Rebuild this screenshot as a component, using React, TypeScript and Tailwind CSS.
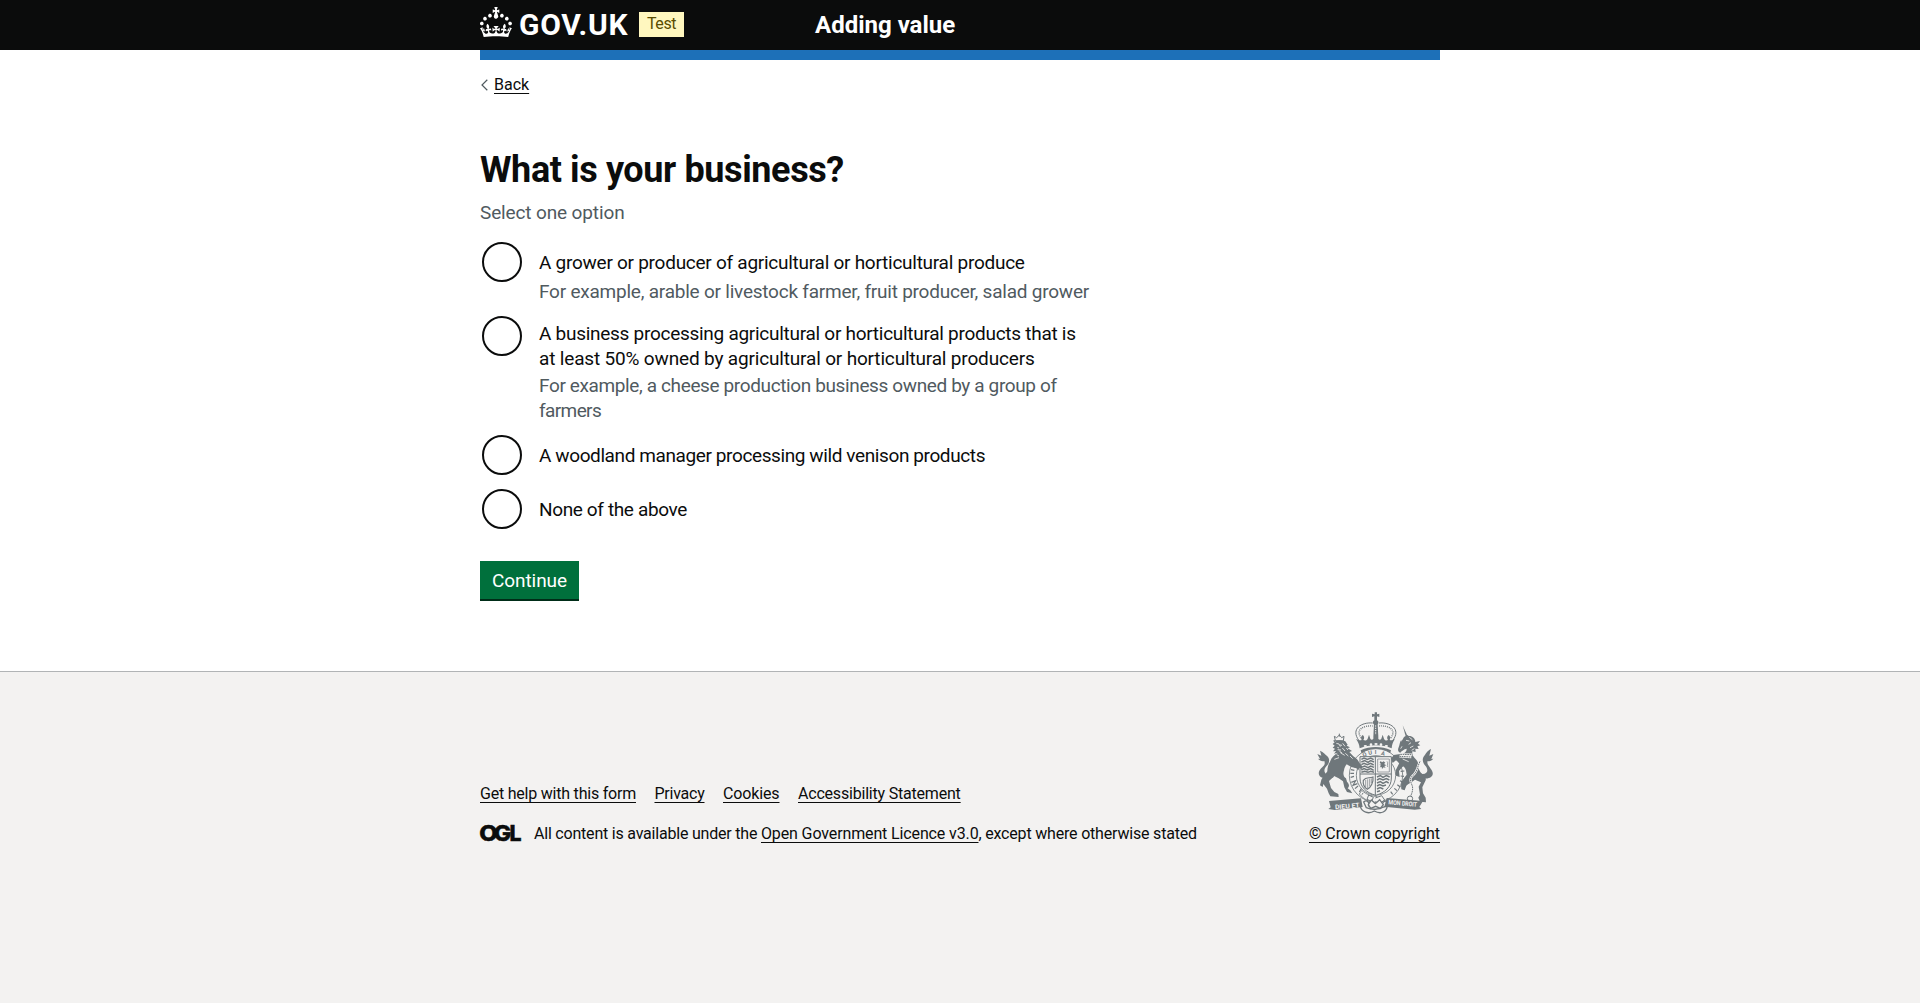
import type { ReactNode } from "react";

const LINK =
  "underline decoration-1 underline-offset-[3px] [text-decoration-skip-ink:none]";

function CrownMark() {
  return (
    <svg viewBox="0 0 32 30" className="h-[30px] w-8 shrink-0" fill="#fff" aria-hidden="true">
      <path d="M22.6 10.4c-1 .4-2-.1-2.4-1-.4-.9.1-2 1-2.4.9-.4 2 .1 2.4 1s-.1 2-1 2.4m4.9 3c-1 .4-2-.1-2.4-1-.4-.9.1-2 1-2.4.9-.4 2 .1 2.4 1s0 2-1 2.4m3.3 4.8c-1 .4-2-.1-2.4-1-.4-.9.1-2 1-2.4.9-.4 2 .1 2.4 1s-.1 2-1 2.4M17 4.7l2.3 1.2V2.5l-2.3.7-.2-.2.9-3h-3.4l.9 3-.2.2c-.1.1-2.3-.7-2.3-.7v3.4L15 4.7c.1.1.1.2.2.2l-1.3 4c-.1.2-.1.4-.1.6 0 1.1.8 2 1.9 2.2h.7c1-.2 1.9-1.1 1.9-2.1 0-.2 0-.4-.1-.6l-1.3-4c-.1-.2 0-.2 0-.3m-7.6 5.7c.9.4 2-.1 2.4-1 .4-.9-.1-2-1-2.4-.9-.4-2 .1-2.4 1s0 2 1 2.4m-5 3c.9.4 2-.1 2.4-1 .4-.9-.1-2-1-2.4-.9-.4-2 .1-2.4 1s.1 2 1 2.4m-3.2 4.8c.9.4 2-.1 2.4-1 .4-.9-.1-2-1-2.4-.9-.4-2 .1-2.4 1s0 2 1 2.4m14.8 11c4.4 0 8.6.3 12.3.8 1.1-4.5 2.4-7 3.7-8.8l-2.5-.9c.2 1.3.3 1.9 0 2.7-.4-.4-.8-1.1-1.1-2.3l-1.2 4c.7-.5 1.3-.8 2-.9-1.1 2.5-2.6 3.1-3.5 3-1.1-.2-1.7-1.2-1.5-2.1.3-1.2 1.5-1.5 2.1-.1 1.1-2.3-.8-3-2-2.3 1.9-1.9 2.1-3.5.6-5.6-2.1 1.6-2.1 3.2-1.2 5.5-1.2-1.4-3.2-.6-2.5 1.6.9-1.4 2.1-.5 1.9.8-.2 1.1-1.7 2.1-3.5 1.9-2.7-.2-2.9-2.1-2.9-3.6.7-.1 1.9.5 2.9 1.9l.4-4.3c-1.1 1.1-2.1 1.4-3.2 1.4.4-1.2 2.1-3 2.1-3h-5.4s1.7 1.9 2.1 3c-1.1 0-2.1-.2-3.2-1.4l.4 4.3c1-1.4 2.2-2 2.9-1.9-.1 1.5-.2 3.4-2.9 3.6-1.9.2-3.4-.8-3.5-1.9-.2-1.3 1-2.2 1.9-.8.7-2.3-1.2-3-2.5-1.6.9-2.2.9-3.9-1.2-5.5-1.5 2-1.3 3.7.6 5.6-1.2-.7-3.1 0-2 2.3.6-1.4 1.8-1.1 2.1.1.2.9-.3 1.9-1.5 2.1-.9.2-2.4-.5-3.5-3 .6 0 1.2.3 2 .9l-1.2-4c-.3 1.1-.7 1.9-1.1 2.3-.3-.8-.2-1.4 0-2.7l-2.9.9C1.3 23 2.6 25.5 3.7 30c3.7-.5 7.9-.8 12.3-.8" />
    </svg>
  );
}

function RoyalArms() {
  const g = "#6f777b";
  const bg = "#f3f2f1";
  return (
    <svg viewBox="45 30 360 315" className="h-[105px] w-[120px]" fill={g} aria-hidden="true">
      {/* crown */}
      <path d="M224 37h7v6l7-2v10l-7-2v12c5 2 6 8 2 12h-12c-4-4-3-10 2-12V49l-7 2V41l8 2z" />
      <path d="M177 122C150 86 186 66 218 69M278 122C305 86 270 66 237 69" fill="none" stroke={g} strokeWidth="3" />
      <path d="M184 114C164 88 192 76 218 78M272 114C292 88 264 76 237 78" fill="none" stroke={g} strokeWidth="4" strokeDasharray="3 3" />
      <path d="M222 72h11l2 38h-15z" />
      <path d="M227 76v30" stroke={bg} strokeWidth="3" strokeDasharray="4 3" fill="none" />
      <path d="M179 145c-1-12-5-20-11-28 8 4 12 5 17 3-3-5-2-12 3-15 5 4 6 10 2 15 6 3 11 1 13-4l4-12 4 12c2 4 6 4 9 1-1-6 2-12 8-15 6 3 8 9 7 15 3 3 7 3 9-1l4-12 4 12c2 5 7 7 12 4-4-5-3-11 2-15 5 4 6 10 3 15 5 2 9 1 16-3-6 8-9 16-10 28-27-12-68-12-96 0z" />
      <path d="M182 151c28-13 62-13 91 0l-3 10c-26-10-59-10-85 0z" />
      <g fill={bg}>
        <ellipse cx="196" cy="138" rx="5" ry="3" /><ellipse cx="213" cy="134" rx="4" ry="4" />
        <ellipse cx="228" cy="132" rx="5" ry="3" /><ellipse cx="243" cy="134" rx="4" ry="4" />
        <ellipse cx="259" cy="138" rx="5" ry="3" />
      </g>
      {/* garter */}
      <circle cx="228" cy="226" r="80" fill={bg} stroke={g} strokeWidth="2.5" />
      <circle cx="228" cy="226" r="59" fill="none" stroke={g} strokeWidth="2.5" />
      <g fill="none" stroke={g} strokeWidth="3.5">
        <path d="M157 197l10 5M153 209l10 2M151 220h11M152 232l10-3M154 247l13-5-8 14 13-5M165 266l9-8M178 276l6-10M294 186l9-5M299 200l10-3M302 214l11-1M302 228l10 1M300 242l9 5M292 254l9 7M283 265l8 7M272 275l6 8" />
      </g>
      <g fill={g} fontFamily="Roboto" fontWeight="700" fontSize="17" textAnchor="middle">
        <text x="194" y="169" transform="rotate(-24 194 164)">Q</text>
        <text x="211" y="164" transform="rotate(-12 211 159)">U</text>
        <text x="227" y="162">I</text>
        <text x="249" y="166" transform="rotate(16 249 161)">A</text>
      </g>
      {/* shield */}
      <path d="M180 170h94v64c0 27-19 44-47 52-28-8-47-25-47-52z" fill={bg} stroke={g} strokeWidth="3" />
      <path d="M226 170v117M180 222h94" fill="none" stroke={g} strokeWidth="3" />
      <path d="M184 178l8-4 10 4 10-4 9 5M184 186l10-4 10 5 8-5 10 4M184 194l8-4 10 4 10-4 9 5M184 202l10-4 10 5 8-5 10 4M184 210l8-4 10 4 10-4 9 5M184 217l10-3 10 3 8-3 10 3M231 231l10-4 8 5 10-5 10 4M231 240l8-4 10 4 10-4 9 4M231 249l10-4 8 5 10-5 7 4M231 258l8-4 10 4 9-3M231 267l9-4 10 4M231 275l9-3" fill="none" stroke={g} strokeWidth="4.5" />
      <path d="M233 177h35v39h-35z" fill="none" stroke={g} strokeWidth="2" />
      <path d="M242 183l4 4 5-3 5 4-4 4 7 4-6 2 4 6-6-2-5 5-1-6-6 1 4-5-5-3 6-1-5-5z" />
      <path d="M261 184c5 5-1 11 2 17" fill="none" stroke={g} strokeWidth="2" />
      <path d="M190 241c8-12 17-5 29-10 2 15-7 32-17 37-8-5-14-14-12-27z" fill="none" stroke={g} strokeWidth="3.5" />
      <path d="M197 240v22M203 238v27M209 236v23M214 235v14" fill="none" stroke={g} strokeWidth="2" />
      {/* garter buckle */}
      <path d="M178 282l7-11c14 13 30 18 46 18l-2 18c-20 0-38-9-51-25z" fill={bg} stroke={g} strokeWidth="2.5" />
      <path d="M206 285l-5 13 14 6 5-12zM189 279l-3 5M226 294l19-7 9 13-15 10-13-5" fill={bg} stroke={g} strokeWidth="3" />
      {/* lion */}
      <path d="M106 122l-3-13 7 4 8-8 7 8 7-4-2 14z" fill={bg} stroke={g} strokeWidth="3" />
      <path d="M118 101v9" stroke={g} strokeWidth="3" />
      <path d="M105 125c8-5 22-5 31-1l7 10-3 3 10 5-7 3 13 8-8 3 12 13c9 6 15 12 18 20l9 10-2 9-7-5-3 8-6-6-15-4-14-8c-4 4-7 11-8 18-4 11-1 20 6 24l3 10c7 7 8 14 2 20l8 6 6 9-16-4-8-14-4-18-13-9-14-7c-5 6-10 11-15 15l6 21 10 12 12 6 1 9-25-2-5-9-5-14-11-14-2 9-8-5 4-17c5-9 12-16 18-25 0-12 3-20 8-29 5-14 14-22 24-27l-12 3 6-8-9 1 6-8-7-3 6-6-6-5 6-5-5-5 8-3z" />
      <path d="M109 130l8 2 4 8M112 142l5 2M113 149l10 1M128 130l7 9M127 144l8 9M121 158l13 8M136 160l9 8M110 164l7 4M139 144l5 6M150 168l8 8M103 178l14-5M120 135l6 1M118 153l8 6" fill="none" stroke={bg} strokeWidth="2.5" />
      <path d="M85 235c-24 3-36-12-24-27 9-12 16-12 12-25-7 2-14-1-19-7l6 1-8-15 12 5-4-15c11 5 16 12 22 17 9 9 6 22-3 30-8 8-10 23 10 27 6-1 10-4 14-9l-2 14c-5 4-10 5-16 4z" />
      {/* unicorn */}
      <path d="M308 76l14 31-5 2z" />
      <path d="M304 125l8-14 10-6 4 3c10-1 20 7 20 18l14-3-6 8 7 5-9 3 4 8-10-1 1 10-10-2c-1 9 2 15 9 22 9 9 11 19 10 31l5 9c7 10 19 15 16 25l-10 21 2 18 8 13 1 14-18-2-5-12 5-9-4-24 7-13-18-8c-10 8-20 12-26 18l-5 14-10-3c-1-11-2-20 4-28l12-16c-2-10-1-19-11-25l-12 14 2 18-11-4-1-16 11-22-10-8-10 8-5-13 8-11 15-2c11 1 25-5 24-17-8 1-16 8-19 12-8-2-8-10-5-16 3-8 3-16 8-23z" />
      <path d="M318 121l10 2M326 133l7-5M330 143l10-5M335 151l8-5M306 139l-4 7M308 177l18 8M328 112l9 7" fill="none" stroke={bg} strokeWidth="2.5" />
      <path d="M301 163l36 1M298 169l36 2M360 184c-9 20-9 33-22 43-12 10-5 20-1 31 3 12-2 24-7 35" fill="none" stroke={bg} strokeWidth="7" />
      <path d="M301 163l36 1M298 169l36 2M360 184c-9 20-9 33-22 43-12 10-5 20-1 31 3 12-2 24-7 35" fill="none" stroke={g} strokeWidth="3" strokeDasharray="5 2" />
      <circle cx="330" cy="296" r="8" fill={bg} stroke={g} strokeWidth="3" />
      <path d="M366 234c25 6 38-7 30-22-6-12-17-19-13-29 7 2 12-1 17-7l-6 1 6-15-12 5 5-20c-13 6-15 15-20 20-8 10-5 22 3 30 9 10 9 24-8 25-7-1-11-4-14-9l1 15c4 4 7 5 11 6z" />
      {/* scroll */}
      <path d="M87 303l96-8 5 26-84 9-19-3 7-5z" />
      <path d="M369 303l-109-9-7 26 91 9 20-2-6-6z" />
      <path d="M181 320c5 16 24 24 42 13 21 12 37 1 39-15l-14 4c-9 7-34 8-49 1l-8-17c10-9 20 3 14 13M262 318c6-14-9-20-14-8" fill="none" stroke={g} strokeWidth="4" />
      <path d="M205 314l9-14 12 11 13-12 11 15-9 11-14-6-15 6z" fill={bg} stroke={g} strokeWidth="4" />
      <g fill={bg} fontFamily="Roboto" fontWeight="700" fontSize="19">
        <text x="105" y="325" textLength="74" lengthAdjust="spacingAndGlyphs" transform="rotate(-5 140 320)">DIEU ET</text>
        <text x="265" y="316" textLength="86" lengthAdjust="spacingAndGlyphs" transform="rotate(5 300 314)">MON DROIT</text>
      </g>
    </svg>
  );
}

function OglLogo() {
  return (
    <svg viewBox="0 0 41 20" className="-mt-px h-5 w-[41px] shrink-0 overflow-visible" aria-label="Open Government Licence">
      <g fill="#0b0c0c" stroke="#0b0c0c" fontFamily="Inter" fontWeight="800" fontSize="22" strokeWidth="0.5">
        <text x="-0.8" y="18" textLength="18.5" lengthAdjust="spacingAndGlyphs">O</text>
        <text x="13.8" y="18" textLength="17.5" lengthAdjust="spacingAndGlyphs">G</text>
        <text x="29.6" y="18" textLength="12" lengthAdjust="spacingAndGlyphs">L</text>
      </g>
    </svg>
  );
}

function Radio({ children, className }: { children: ReactNode; className: string }) {
  return (
    <label className={"flex " + className}>
      <span className="ml-0.5 size-10 shrink-0 rounded-full border-2 border-[#0b0c0c] bg-white" />
      <span className="ml-[17px] block whitespace-nowrap">{children}</span>
    </label>
  );
}

export default function App() {
  return (
    <div className="flex h-[1003px] flex-col overflow-hidden bg-white font-['Roboto',sans-serif] text-[#0b0c0c]">
      <header className="h-[50px] shrink-0 bg-[#0b0c0c]">
        <div className="mx-auto flex w-[960px] items-start text-white">
          <div className="mt-[7px] flex w-[159px] items-start">
            <CrownMark />
            <span className="ml-[7px] mt-px text-[30px] leading-[33px] font-bold tracking-[0.75px] whitespace-nowrap">
              GOV.UK
            </span>
          </div>
          <span className="mt-3 h-[25px] w-[45px] bg-[#fff7bf] text-center text-base leading-6 tracking-[-0.4px] text-[#594d00]">
            Test
          </span>
          <span className="ml-[131px] mt-[10px] text-2xl leading-[30px] font-bold">Adding value</span>
        </div>
      </header>

      <main className="mx-auto w-[960px] grow">
        <div className="h-2.5 bg-[#1d70b8]" />
        <a className="mt-[15px] flex h-5 items-start text-base leading-5">
          <svg viewBox="0 0 14 20" className="h-5 w-[14px]" fill="none" stroke="#505a5f" aria-hidden="true">
            <path d="M7.3 4.8L2 10l5.3 5.2" strokeWidth="1.2" />
          </svg>
          <span className={LINK}>Back</span>
        </a>

        <h1 className="mt-[55px] text-4xl leading-10 font-bold tracking-[-0.39px]">What is your business?</h1>
        <p className="mt-[10px] text-[19px] leading-[25px] tracking-[-0.13px] text-[#505a5f]">Select one option</p>

        <div className="mt-[17px] text-[19px] leading-[25px]">
          <Radio className="h-[74px]">
            <span className="mt-2 block tracking-[-0.262px]">
              A grower or producer of agricultural or horticultural produce
            </span>
            <span className="mt-1 block tracking-[-0.225px] text-[#505a5f]">
              For example, arable or livestock farmer, fruit producer, salad grower
            </span>
          </Radio>
          <Radio className="h-[119px]">
            <span className="mt-[5px] block tracking-[-0.276px]">
              A business processing agricultural or horticultural products that is
            </span>
            <span className="block tracking-[-0.165px]">
              at least 50% owned by agricultural or horticultural producers
            </span>
            <span className="mt-0.5 block tracking-[-0.375px] text-[#505a5f]">
              For example, a cheese production business owned by a group of
            </span>
            <span className="block tracking-[-0.6px] text-[#505a5f]">farmers</span>
          </Radio>
          <Radio className="h-[54px]">
            <span className="mt-2 block tracking-[-0.396px]">
              A woodland manager processing wild venison products
            </span>
          </Radio>
          <Radio className="h-[72px]">
            <span className="mt-2 block tracking-[-0.365px]">None of the above</span>
          </Radio>
        </div>

        <button className="block h-[38px] w-[99px] bg-[#00703c] pt-0.5 text-[19px] tracking-[-0.08px] text-white shadow-[0_2px_0_#002d18]">
          Continue
        </button>
      </main>

      <footer className="h-[332px] shrink-0 border-t border-[#b1b4b6] bg-[#f3f2f1] text-base leading-5">
        <div className="mx-auto flex w-[960px] justify-between">
          <div className="pt-28">
            <nav className="flex gap-[18.5px] whitespace-nowrap">
              <a className={LINK + " tracking-[-0.217px]"}>Get help with this form</a>
              <a className={LINK + " tracking-[-0.24px]"}>Privacy</a>
              <a className={LINK + " tracking-[-0.13px]"}>Cookies</a>
              <a className={LINK + " tracking-[-0.2px]"}>Accessibility Statement</a>
            </nav>
            <div className="mt-5 flex items-start">
              <OglLogo />
              <p className="ml-[13px] whitespace-nowrap">
                <span className="tracking-[-0.206px]">All content is available under the </span>
                <a className={LINK + " tracking-[-0.129px]"}>Open Government Licence v3.0</a>
                <span className="tracking-[-0.19px]">, except where otherwise stated</span>
              </p>
            </div>
          </div>
          <div className="flex flex-col items-end pt-[38px]">
            <div className="mr-[5px]">
              <RoyalArms />
            </div>
            <a className={LINK + " mt-[9px] tracking-[-0.088px]"}>© Crown copyright</a>
          </div>
        </div>
      </footer>
    </div>
  );
}
